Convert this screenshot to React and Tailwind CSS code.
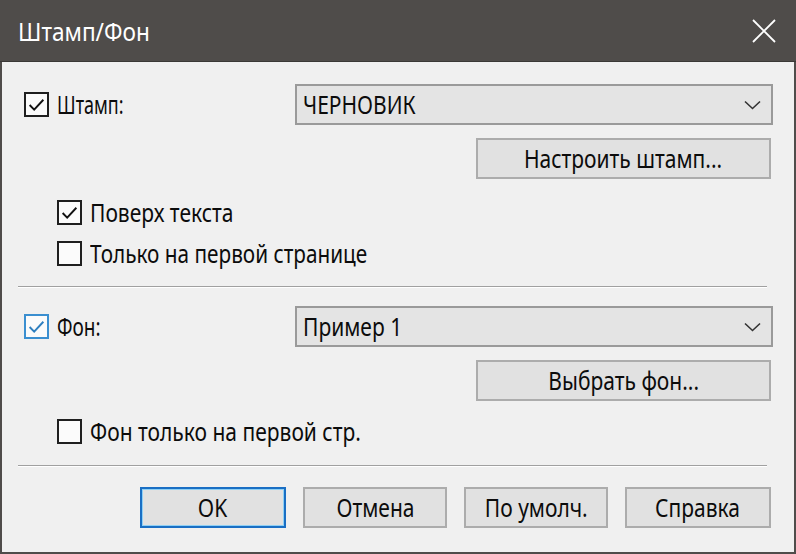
import React from "react";

const FONT = { fontFamily: '"Noto Sans", "Open Sans", sans-serif' };

function Check({ checked, blue }) {
  return (
    <div
      className={
        "w-[25px] h-[25px] shrink-0 border-2 bg-[#fbfbfb] flex items-center justify-center " +
        (blue ? "border-[#3b8fd0]" : "border-[#1f1f1f]")
      }
    >
      {checked && (
        <svg width="19" height="19" viewBox="0 0 18 18" fill="none">
          <polyline
            points="2.5,9.5 6.8,13.8 15.5,4.5"
            stroke={blue ? "#2f7fbf" : "#111"}
            strokeWidth="1.8"
          />
        </svg>
      )}
    </div>
  );
}

function T({ children, className = "scale-x-[0.84]" }) {
  return (
    <span className={"inline-block whitespace-nowrap leading-none origin-left " + className}>
      {children}
    </span>
  );
}

function Combo({ text }) {
  return (
    <div className="w-[478px] h-[41px] border-2 border-[#9a9a9a] bg-[#e4e4e4] flex items-center pl-[6px] pr-[10px]">
      <T className="scale-x-[0.84] text-[25px] text-[#0c0c0c]">{text}</T>
      <svg className="ml-auto" width="17" height="10" viewBox="0 0 17 10" fill="none">
        <polyline points="1,1.5 8.5,8.5 16,1.5" stroke="#333" strokeWidth="1.6" />
      </svg>
    </div>
  );
}

function Btn({ children, w = "w-[295px]", primary }) {
  return (
    <div
      className={
        w +
        " h-[41px] shrink-0 flex items-center justify-center bg-[#e1e1e1] " +
        (primary ? "border-2 border-[#1a6fc4] shadow-[inset_0_0_0_1px_#8fd0f5]" : "border-2 border-[#acacac]")
      }
    >
      <span className="inline-block whitespace-nowrap leading-none scale-x-[0.84] text-[25px] text-[#0c0c0c]">{children}</span>
    </div>
  );
}

export default function App() {
  return (
    <div className="w-[796px] h-[554px] flex flex-col bg-[#4f4c4a]" style={FONT}>
      <div className="h-[62px] shrink-0 flex items-center pl-[18px] pr-[20px] border-b border-[#3a3836]">
        <T className="text-[26px] text-white scale-x-[0.87]">Штамп/Фон</T>
        <svg className="ml-auto" width="24" height="24" viewBox="0 0 24 24" fill="none">
          <line x1="1" y1="1" x2="23" y2="23" stroke="#fff" strokeWidth="1.8" />
          <line x1="23" y1="1" x2="1" y2="23" stroke="#fff" strokeWidth="1.8" />
        </svg>
      </div>
      <div className="flex-1 min-h-0 flex flex-col bg-[#f0f0f0] mx-[2px] mb-[2px] pt-[22px] text-[#0c0c0c]">
        <div className="h-[41px] shrink-0 flex items-center pl-[22px] pr-[21px]">
          <Check checked />
          <T className="ml-[8px] text-[25px] scale-x-[0.72]">Штамп:</T>
          <div className="ml-auto">
            <Combo text="ЧЕРНОВИК" />
          </div>
        </div>
        <div className="flex justify-end pr-[23px] mt-[13px]">
          <Btn>Настроить штамп...</Btn>
        </div>
        <div className="h-[24px] shrink-0 flex items-center pl-[55px] mt-[21px]">
          <Check checked />
          <T className="ml-[8px] text-[25px] scale-x-[0.84]">Поверх текста</T>
        </div>
        <div className="h-[24px] shrink-0 flex items-center pl-[55px] mt-[17px]">
          <Check />
          <T className="ml-[8px] text-[25px] scale-x-[0.83]">Только на первой странице</T>
        </div>
        <div className="h-[2px] shrink-0 ml-[16px] mr-[27px] mt-[21px] border-t border-[#a0a0a0] border-b border-b-white" />
        <div className="h-[41px] shrink-0 flex items-center pl-[22px] pr-[21px] mt-[18px]">
          <Check checked blue />
          <T className="ml-[8px] text-[25px] scale-x-[0.76]">Фон:</T>
          <div className="ml-auto">
            <Combo text="Пример 1" />
          </div>
        </div>
        <div className="flex justify-end pr-[23px] mt-[13px]">
          <Btn>Выбрать фон...</Btn>
        </div>
        <div className="h-[24px] shrink-0 flex items-center pl-[55px] mt-[18px]">
          <Check />
          <T className="ml-[8px] text-[25px] scale-x-[0.84]">Фон только на первой стр.</T>
        </div>
        <div className="h-[2px] shrink-0 ml-[16px] mr-[27px] mt-[22px] border-t border-[#a0a0a0] border-b border-b-white" />
        <div className="flex justify-end gap-[17px] pr-[23px] mt-[20px]">
          <Btn w="w-[146px]" primary>OK</Btn>
          <Btn w="w-[144px]">Отмена</Btn>
          <Btn w="w-[144px]">По умолч.</Btn>
          <Btn w="w-[146px]">Справка</Btn>
        </div>
      </div>
    </div>
  );
}
